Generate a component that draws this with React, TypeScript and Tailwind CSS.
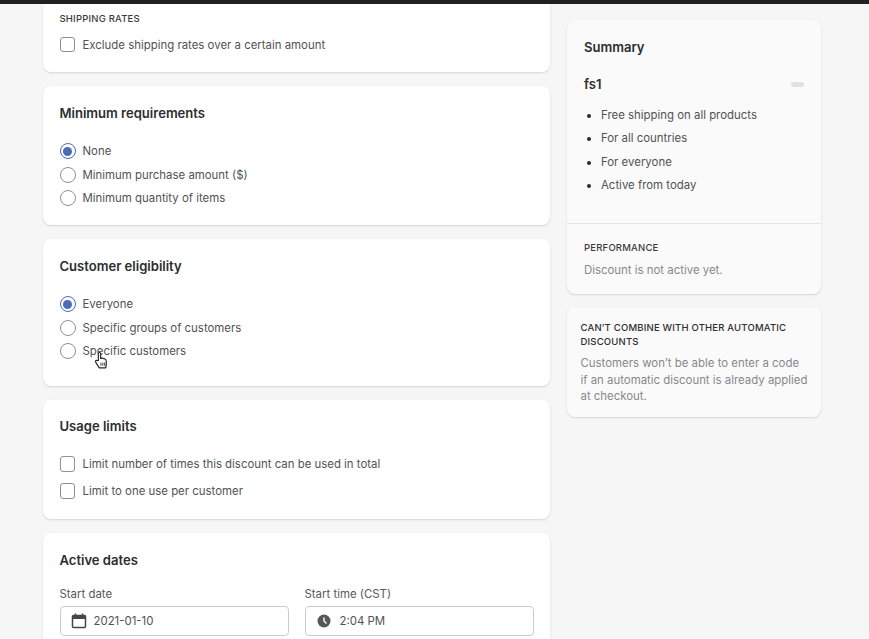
import React from "react";

const Radio = ({ on, label }: { on?: boolean; label: string }) => (
  <div className="flex items-center h-[23.4px]">
    {on ? (
      <span className="w-[16px] h-[16px] rounded-full border-[1.5px] border-[#4a6db5] flex items-center justify-center shrink-0">
        <span className="w-[9px] h-[9px] rounded-full bg-[#4a6db5]" />
      </span>
    ) : (
      <span className="w-[16px] h-[16px] rounded-full border-[1.5px] border-[#8c9196] bg-white shrink-0" />
    )}
    <span className="ml-[7px] text-[#4f5255]">{label}</span>
  </div>
);

const Check = ({ label }: { label: string }) => (
  <div className="flex items-center">
    <span className="w-[15.5px] h-[15.5px] rounded-[3px] border-[1.5px] border-[#8c9196] bg-white shrink-0" />
    <span className="ml-[7.5px] text-[#4f5255]">{label}</span>
  </div>
);

const Card = ({ className, children }: { className: string; children: React.ReactNode }) => (
  <section className={`bg-white rounded-[8px] shadow-[0_1px_2px_rgba(23,24,24,0.15)] px-[16.5px] ${className}`}>{children}</section>
);

const H = ({ children }: { children: React.ReactNode }) => (
  <h2 className="text-[13.05px] leading-[18px] font-semibold text-[#2c2e30]">{children}</h2>
);

const Field = ({ label, value, icon }: { label: string; value: string; icon: React.ReactNode }) => (
  <div className="flex-1">
    <div className="text-[#55585b] leading-[16px]">{label}</div>
    <div className="mt-[4px] h-[30px] border border-[#c9cccf] rounded-[4px] bg-white flex items-center pl-[10px] text-[#4f5255]">
      {icon}
      <span className="ml-[7px]">{value}</span>
    </div>
  </div>
);

export default function App() {
  return (
    <div className="relative w-[869px] h-[639px] overflow-hidden bg-[#f6f6f6] text-[11.42px] leading-[16px] font-['Inter',sans-serif]">
      <div className="h-[4px] bg-[#202123]" />
      <div className="flex items-start pl-[43px] gap-[17px]">
        <main className="w-[507px] flex flex-col shrink-0">
          <Card className="h-[68px] rounded-t-none pt-[8px]">
            <div className="text-[9.5px] leading-[14px] font-medium tracking-[0.2px] text-[#3a3d40]">SHIPPING RATES</div>
            <div className="mt-[10.5px]"><Check label="Exclude shipping rates over a certain amount" /></div>
          </Card>
          <Card className="mt-[14px] h-[139px] pt-[18px]">
            <H>Minimum requirements</H>
            <div className="mt-[17.5px]">
              <Radio on label="None" />
              <Radio label="Minimum purchase amount ($)" />
              <Radio label="Minimum quantity of items" />
            </div>
          </Card>
          <Card className="mt-[14px] h-[146.5px] pt-[18px]">
            <H>Customer eligibility</H>
            <div className="mt-[17.5px]">
              <Radio on label="Everyone" />
              <Radio label="Specific groups of customers" />
              <Radio label="Specific customers" />
            </div>
          </Card>
          <Card className="mt-[14.5px] h-[118.5px] pt-[17px]">
            <H>Usage limits</H>
            <div className="mt-[21px] flex flex-col gap-[11px]">
              <Check label="Limit number of times this discount can be used in total" />
              <Check label="Limit to one use per customer" />
            </div>
          </Card>
          <Card className="mt-[14.5px] h-[130px] pt-[18px]">
            <H>Active dates</H>
            <div className="mt-[17px] flex gap-[16px]">
              <Field
                label="Start date"
                value="2021-01-10"
                icon={
                  <svg viewBox="0 0 16 16" className="w-[16px] h-[16px] text-[#44474a] shrink-0" fill="none" stroke="currentColor">
                    <rect x="1.5" y="2.5" width="13" height="12" rx="1" strokeWidth="1.5" />
                    <path d="M1.5 4.5h13" strokeWidth="3" />
                    <path d="M4.5 0.5v2M11.5 0.5v2" strokeWidth="1.5" />
                  </svg>
                }
              />
              <Field
                label="Start time (CST)"
                value="2:04 PM"
                icon={
                  <svg viewBox="0 0 14 14" className="w-[14px] h-[14px] text-[#55585b] shrink-0 ml-px mr-[2px]">
                    <circle cx="7" cy="7" r="6.5" fill="currentColor" />
                    <path d="M7 3.5V7l2.5 2.5" fill="none" stroke="#fff" strokeWidth="1.4" />
                  </svg>
                }
              />
            </div>
          </Card>
        </main>
        <aside className="w-[254px] shrink-0 mt-[16px] flex flex-col gap-[13px]">
          <section className="h-[274px] bg-[#fafafa] rounded-[8px] shadow-[0_1px_2px_rgba(23,24,24,0.15)] flex flex-col">
            <div className="h-[204px] px-[17px] pt-[18px] border-b border-[#e6e7e8]">
              <H>Summary</H>
              <div className="mt-[19px] flex items-center justify-between">
                <span className="text-[13.05px] leading-[18px] font-semibold text-[#2c2e30]">fs1</span>
                <span className="w-[13px] h-[5px] rounded-full bg-[#e0e1e2]" />
              </div>
              <ul className="mt-[11px] list-disc pl-[17px] text-[#4f5255] marker:text-[#27292b]">
                <li className="h-[23.3px] leading-[23.3px]">Free shipping on all products</li>
                <li className="h-[23.3px] leading-[23.3px]">For all countries</li>
                <li className="h-[23.3px] leading-[23.3px]">For everyone</li>
                <li className="h-[23.3px] leading-[23.3px]">Active from today</li>
              </ul>
            </div>
            <div className="px-[17px] pt-[17px]">
              <div className="text-[9.5px] leading-[14px] font-medium tracking-[0.2px] text-[#3a3d40]">PERFORMANCE</div>
              <div className="mt-[7px] text-[#85898d]">Discount is not active yet.</div>
            </div>
          </section>
          <section className="h-[110px] bg-[#fafafa] rounded-[8px] shadow-[0_1px_2px_rgba(23,24,24,0.15)] pl-[13.5px] pr-[12px] pt-[14px]">
            <div className="text-[9.5px] leading-[13.5px] font-medium tracking-[0.2px] text-[#2c2e30]">CAN’T COMBINE WITH OTHER AUTOMATIC DISCOUNTS</div>
            <p className="mt-[7px] text-[#85898d] leading-[16.6px]">Customers won’t be able to enter a code<br />if an automatic discount is already applied<br />at checkout.</p>
          </section>
        </aside>
      </div>
      <svg viewBox="0 0 14 18" className="absolute left-[94px] top-[351px] w-[15px] h-[19px]" fill="#fff" stroke="#222" strokeWidth="1.1" strokeLinejoin="round">
        <path d="M4 9V2.5a1.1 1.1 0 0 1 2.2 0V7l1-.3 1 .2 1 .3 1 .4c1 .4 1.3 1 1.3 2v3.5L11 16H5L2 11.5 1.3 10c-.3-1 1-1.6 1.6-.8z" />
        <path d="M6.5 11v3M8.3 11v3M10 11v3" fill="none" strokeWidth="0.8" />
      </svg>
    </div>
  );
}
